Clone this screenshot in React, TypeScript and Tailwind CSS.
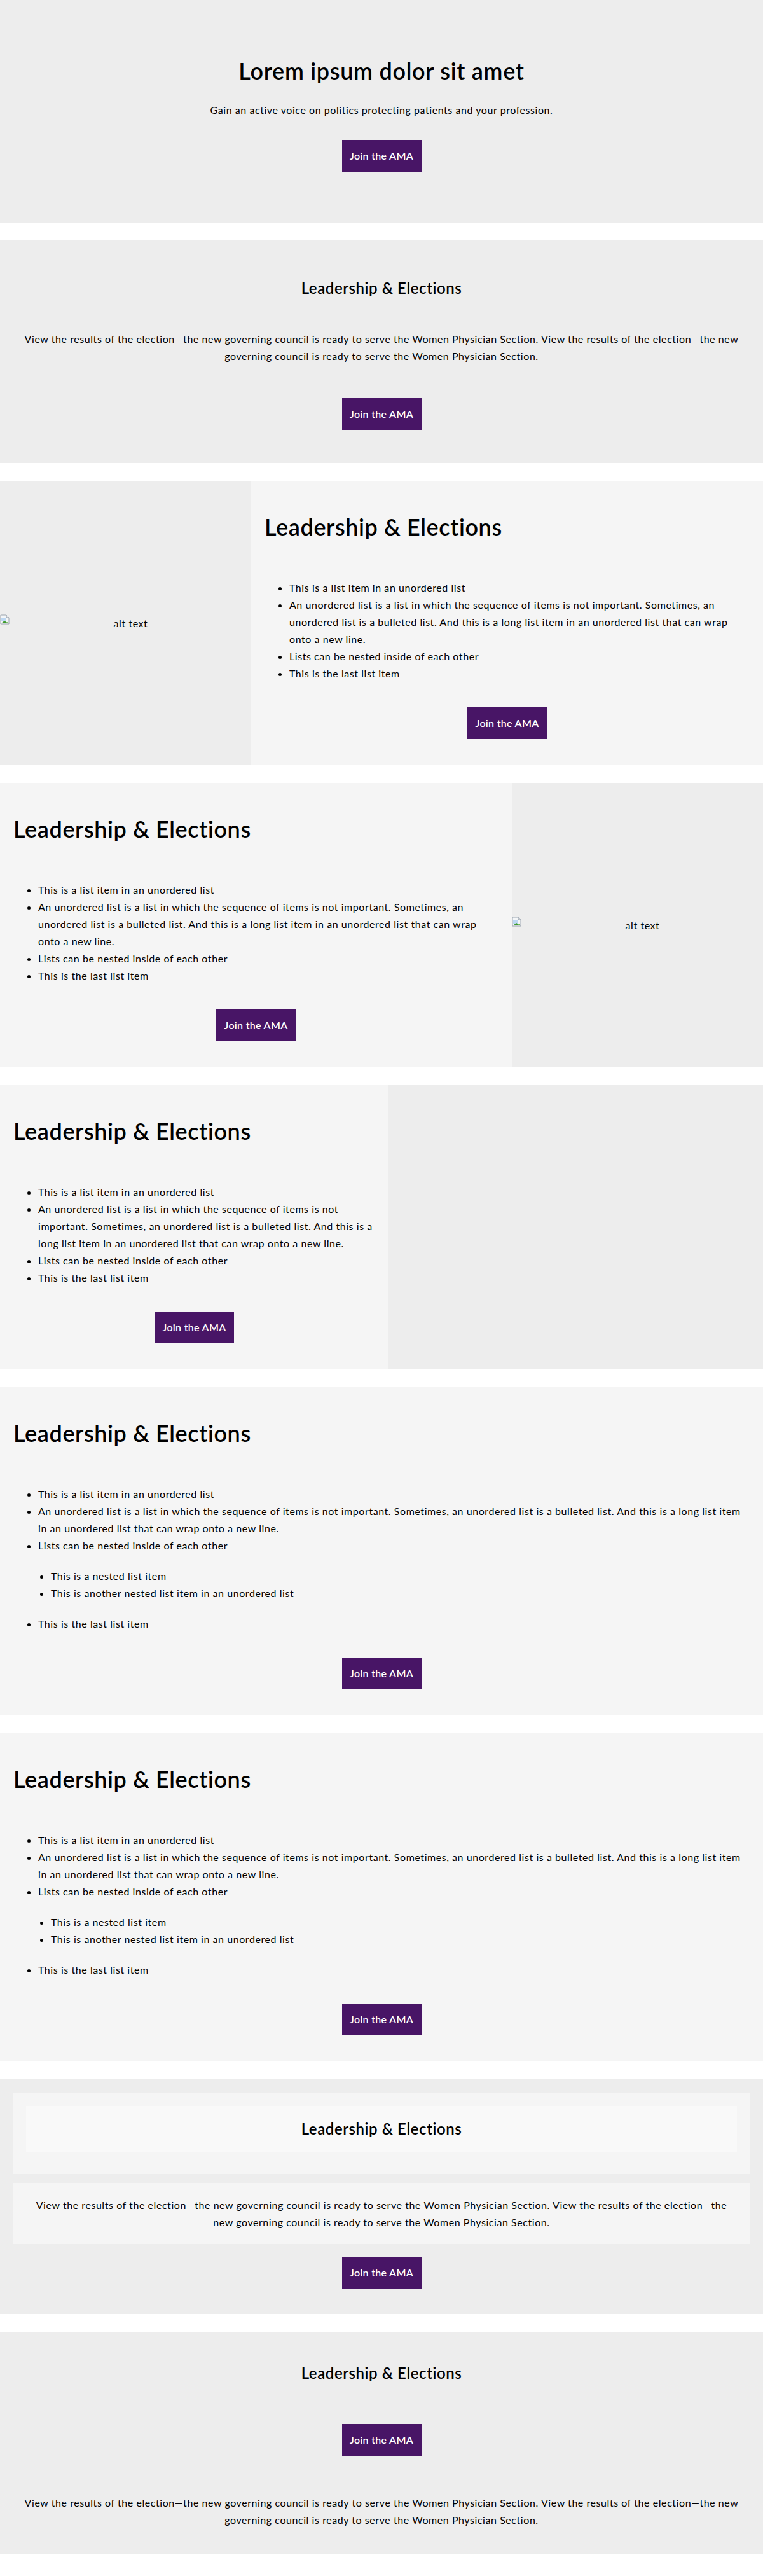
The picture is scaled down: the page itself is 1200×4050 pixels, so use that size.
const items = [
  "This is a list item in an unordered list",
  "An unordered list is a list in which the sequence of items is not important. Sometimes, an unordered list is a bulleted list. And this is a long list item in an unordered list that can wrap onto a new line.",
  "Lists can be nested inside of each other",
  "This is the last list item",
];

const para =
  "View the results of the election\u2014the new governing council is ready to serve the Women Physician Section. View the results of the election\u2014the new governing council is ready to serve the Women Physician Section.";

const JoinButton = () => (
  <button className="mx-auto flex h-[50px] w-[125px] items-center justify-center bg-[#481566] text-[16px] font-semibold tracking-[0.3px] text-white">
    Join the AMA
  </button>
);

const BrokenImage = () => (
  <div className="flex w-full items-start">
    <svg width="16" height="16" viewBox="0 0 16 16" className="mt-[-6px] shrink-0">
      <path d="M1 1h9l4 4v10H1z" fill="#f4f6f8" stroke="#9aa3ad" strokeWidth="1" />
      <path d="M10 1v4h4" fill="#dfe3e8" stroke="#9aa3ad" strokeWidth="1" />
      <path d="M2 6h8v5H2z" fill="#bcd7f2" />
      <path d="M2 14l5-4 6 4z" fill="#3f9b2f" />
      <path d="M9 14l4-3v3z" fill="#6cc04a" />
    </svg>
    <span className="flex-1 text-center text-[16px] leading-[16px]">alt text</span>
  </div>
);

const List = ({ nested }: { nested?: boolean }) => (
  <ul className="mt-[60px] list-disc pl-[39px] text-[16px] leading-[27px]">
    <li>{items[0]}</li>
    <li>{items[1]}</li>
    <li>
      {items[2]}
      {nested && (
        <ul className="my-[21px] list-disc pl-[20px]">
          <li>This is a nested list item</li>
          <li>This is another nested list item in an unordered list</li>
        </ul>
      )}
    </li>
    <li>{items[3]}</li>
  </ul>
);

const ListContent = ({ nested }: { nested?: boolean }) => (
  <div className="px-[21px] pt-[50px] pb-[41px]">
    <h2 className="text-[36px] font-semibold leading-[44px] tracking-[0.6px]">Leadership &amp; Elections</h2>
    <List nested={nested} />
    <div className="mt-[40px]">
      <JoinButton />
    </div>
  </div>
);

export default function App() {
  return (
    <div className="flex flex-col gap-[28px] bg-white pb-[28px] font-[Lato,sans-serif] tracking-[0.56px] text-black">
      {/* hero */}
      <section className="bg-[#ededed] pt-[89px] pb-[80px] text-center">
        <h1 className="text-[36px] font-semibold leading-[44px] tracking-[0.7px]">Lorem ipsum dolor sit amet</h1>
        <p className="mt-[28px] text-[16px] leading-[24px]">
          Gain an active voice on politics protecting patients and your profession.
        </p>
        <div className="mt-[35px]">
          <JoinButton />
        </div>
      </section>

      {/* centered text block */}
      <section className="bg-[#ededed] px-[21px] pt-[59px] pb-[52px] text-center">
        <h2 className="text-[24px] font-semibold leading-[32px]">Leadership &amp; Elections</h2>
        <p className="mt-[50px] text-[16px] leading-[27px]">{para}</p>
        <div className="mt-[53px]">
          <JoinButton />
        </div>
      </section>

      {/* image left */}
      <section className="flex bg-[#f5f5f5]">
        <div className="flex w-[395px] shrink-0 items-center bg-[#ededed]">
          <BrokenImage />
        </div>
        <div className="flex-1">
          <ListContent />
        </div>
      </section>

      {/* image right */}
      <section className="flex bg-[#f5f5f5]">
        <div className="flex-1">
          <ListContent />
        </div>
        <div className="flex w-[395px] shrink-0 items-center bg-[#ededed]">
          <BrokenImage />
        </div>
      </section>

      {/* half grey */}
      <section className="flex bg-[#ededed]">
        <div className="w-[611px] shrink-0 bg-[#f5f5f5]">
          <ListContent />
        </div>
        <div className="flex-1" />
      </section>

      <section className="bg-[#f5f5f5]">
        <ListContent nested />
      </section>

      <section className="bg-[#f5f5f5]">
        <ListContent nested />
      </section>

      {/* boxed */}
      <section className="bg-[#ededed] px-[21px] pt-[21px] pb-[40px] text-center">
        <div className="bg-[#f5f5f5] px-[20px] pt-[21px] pb-[35px]">
          <div className="flex h-[72px] items-center justify-center bg-[#f9f9f9]">
            <h2 className="text-[24px] font-semibold leading-[32px]">Leadership &amp; Elections</h2>
          </div>
        </div>
        <div className="mt-[14px] bg-[#f5f5f5] px-[21px] py-[21px]">
          <p className="text-[16px] leading-[27px]">{para}</p>
        </div>
        <div className="mt-[20px]">
          <JoinButton />
        </div>
      </section>

      {/* button above text */}
      <section className="bg-[#ededed] px-[21px] pt-[49px] pb-[40px] text-center">
        <h2 className="text-[24px] font-semibold leading-[32px]">Leadership &amp; Elections</h2>
        <div className="mt-[64px]">
          <JoinButton />
        </div>
        <p className="mt-[60px] text-[16px] leading-[27px]">{para}</p>
      </section>
    </div>
  );
}
